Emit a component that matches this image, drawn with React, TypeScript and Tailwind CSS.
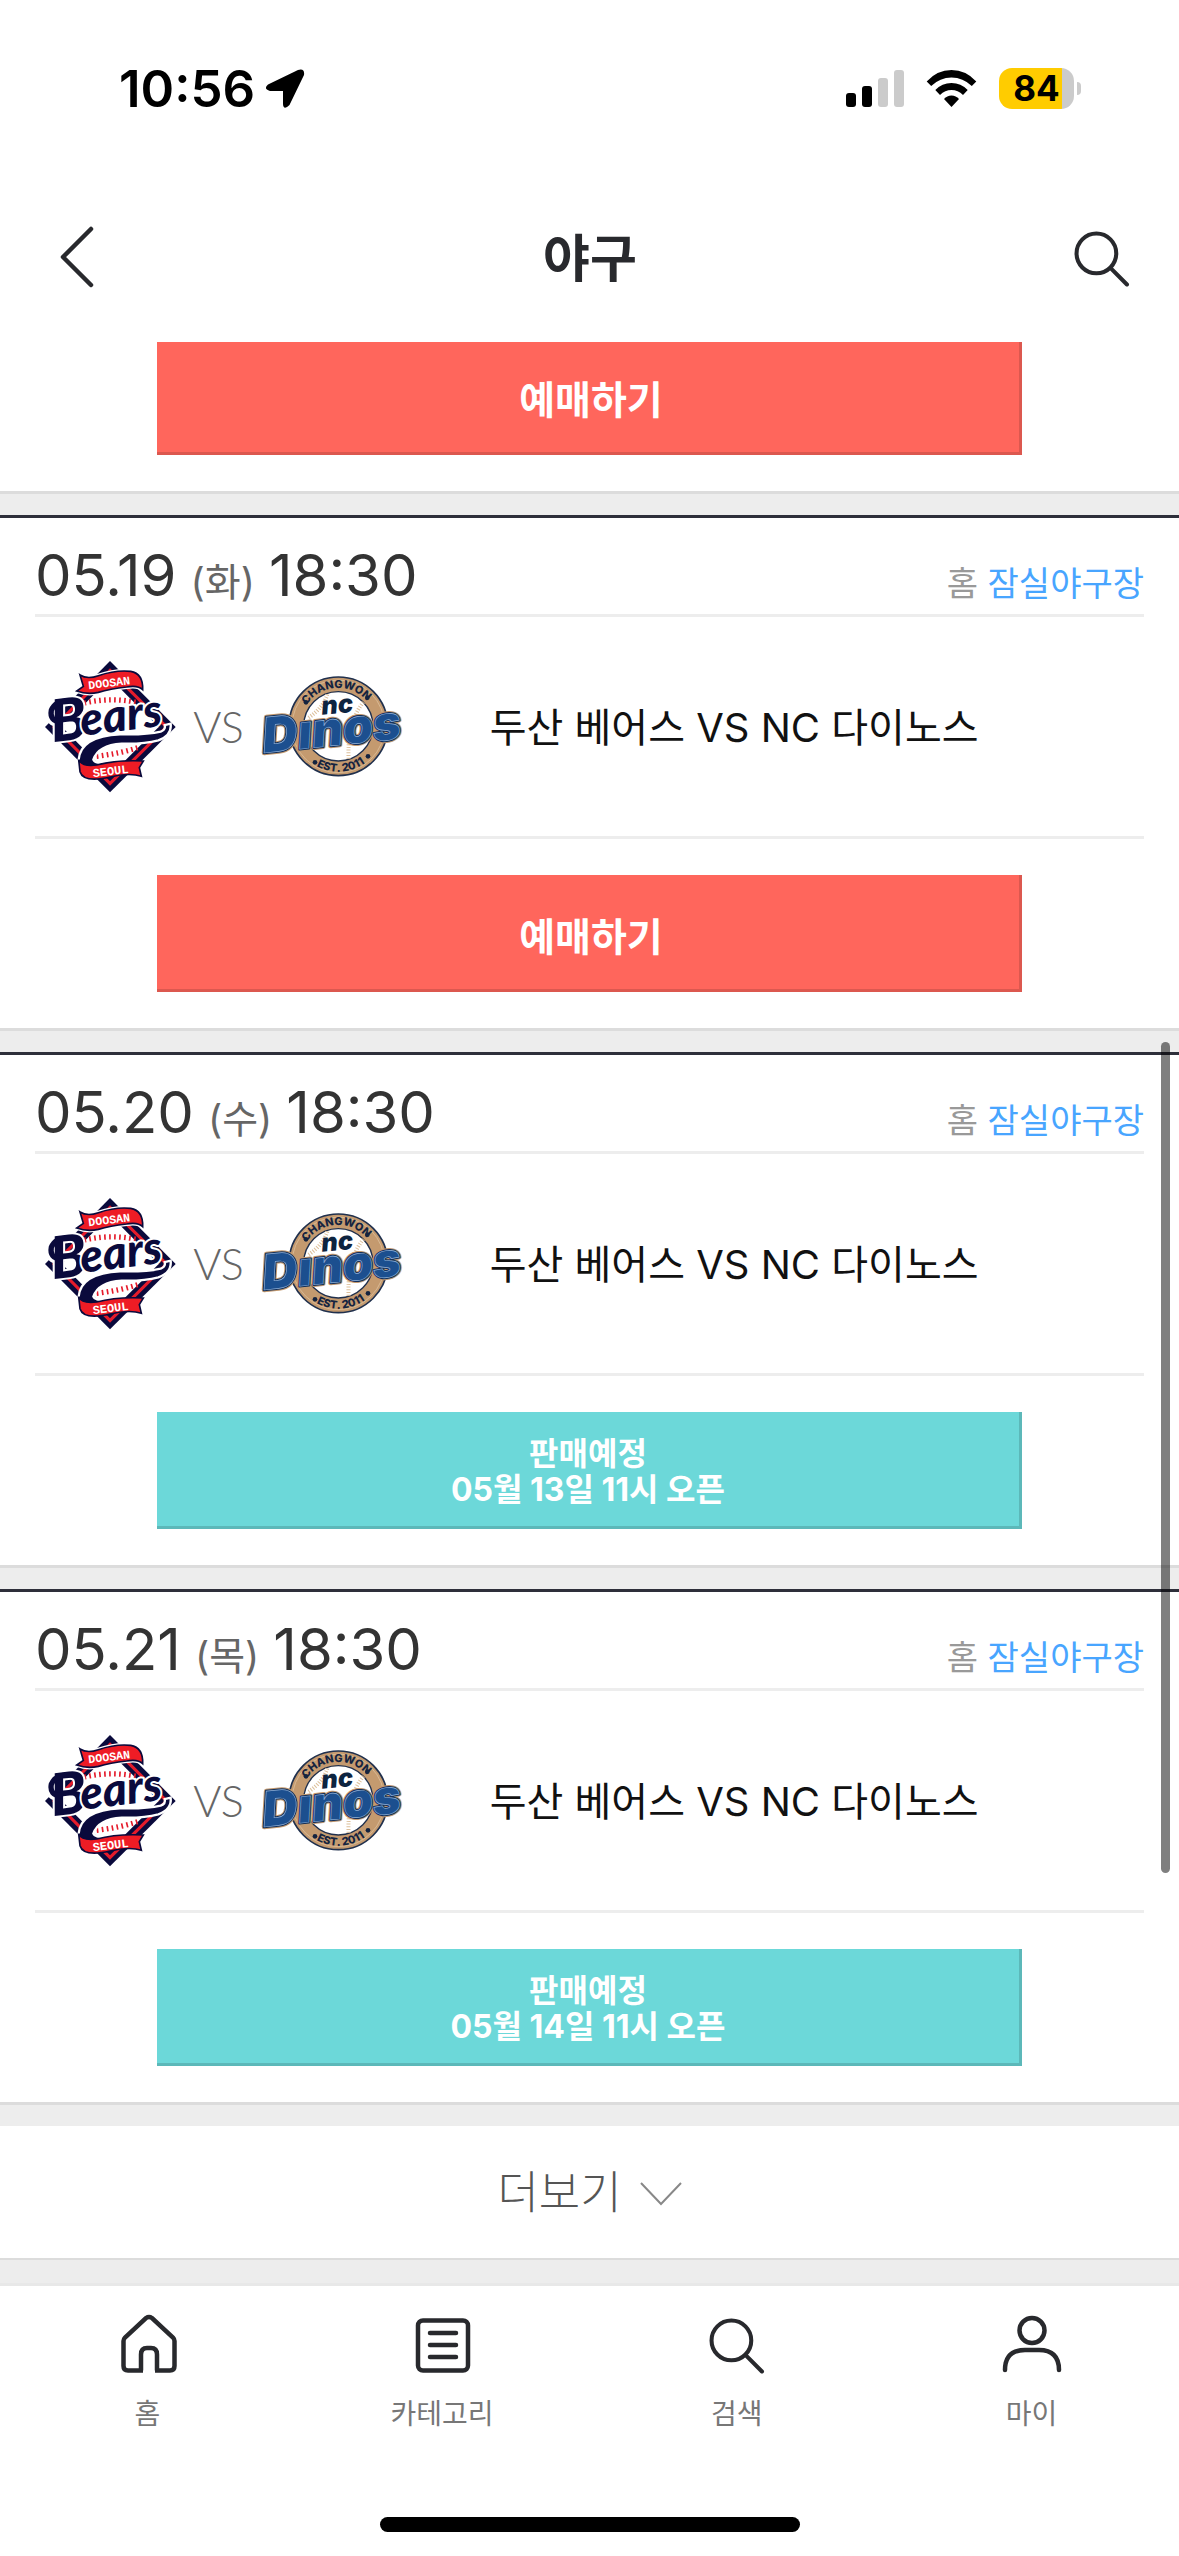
import React from "react";

const FONT = "font-[Inter,'Noto_Sans_CJK_KR',sans-serif]";

type Match = {
  date: string;
  day: string;
  time: string;
  venue: string;
  title: string;
  opens?: string;
};

const matches: Match[] = [
  { date: "05.19", day: "화", time: "18:30", venue: "잠실야구장", title: "두산 베어스 VS NC 다이노스" },
  { date: "05.20", day: "수", time: "18:30", venue: "잠실야구장", title: "두산 베어스 VS NC 다이노스", opens: "05월 13일 11시 오픈" },
  { date: "05.21", day: "목", time: "18:30", venue: "잠실야구장", title: "두산 베어스 VS NC 다이노스", opens: "05월 14일 11시 오픈" },
];

function BearsLogo() {
  return (
    <svg viewBox="42 63 399 399" className="size-[133px] shrink-0" role="img" aria-label="Doosan Bears">
      <path d="M240 66 437 264 240 460 45 264Z" fill="#0a0a3c" />
      <path d="M240 88 416 264 240 440 66 264Z" fill="#e51b2b" />
      <path d="M240 101 403 264 240 427 79 264Z" fill="#0a0a3c" />
      <path d="M240 118 386 264 240 410 96 264Z" fill="#fff" />
      <path d="M163 192Q240 174 320 190" fill="none" stroke="#e51b2b" strokeWidth="16" strokeDasharray="5 10" />
      <path d="M200 352Q270 344 330 324" fill="none" stroke="#e51b2b" strokeWidth="16" strokeDasharray="5 10" />
      <path d="M150 108Q172 122 205 110Q258 92 302 97Q340 104 338 152Q324 138 290 144Q240 150 205 160Q172 168 140 156L160 142Z" fill="#e51b2b" stroke="#fff" strokeWidth="12" />
      <path d="M150 108Q172 122 205 110Q258 92 302 97Q340 104 338 152Q324 138 290 144Q240 150 205 160Q172 168 140 156L160 142Z" fill="#ee1c25" stroke="#0a0a3c" strokeWidth="5" />
      <text transform="translate(239 143) rotate(-7)" textAnchor="middle" className="font-['Liberation_Mono']" fontWeight="700" fontSize="35" fill="#fff">DOOSAN</text>
      {/* tail that sweeps from the last letter back under the name */}
      <path d="M422 254Q426 290 385 304Q340 316 275 314Q205 318 190 362Q194 374 232 374L214 400Q142 398 146 362Q152 292 270 286Q350 288 392 278Q408 272 404 258Z" fill="#0a0a3c" stroke="#fff" strokeWidth="7" />
      <path d="M146 362Q156 384 200 378Q260 362 340 366L328 386 334 412Q300 400 240 414Q160 432 150 398Z" fill="#ee1c25" stroke="#0a0a3c" strokeWidth="5" />
      <text transform="translate(243 408) rotate(-7)" textAnchor="middle" className="font-['Liberation_Mono']" fontWeight="700" fontSize="36" fill="#fff">SEOUL</text>
      <path d="M92 252Q52 250 58 214Q72 176 128 184" fill="none" stroke="#fff" strokeWidth="26" />
      <g className="font-[Lato]" fontWeight="900" fontStyle="italic" fill="#0a0a3c" stroke="#fff" strokeWidth="12" paintOrder="stroke" strokeLinejoin="round">
        <text transform="translate(68 310) rotate(-7)" fontSize="176">B</text>
        <text transform="translate(156 290) rotate(-7)" fontSize="138">ears</text>
      </g>
      <path d="M92 248Q58 246 64 214Q78 180 132 187" fill="none" stroke="#0a0a3c" strokeWidth="16" strokeLinecap="round" />
    </svg>
  );
}

function DinosLogo({ id }: { id: string }) {
  return (
    <svg viewBox="690 105 450 315" className="h-[105px] w-[150px] shrink-0 overflow-visible" role="img" aria-label="NC Dinos">
      <defs>
        <path id={`${id}-top`} d="M810 262A115 115 0 0 1 1040 262" />
        <path id={`${id}-bottom`} d="M789 262A136 136 0 0 0 1061 262" />
      </defs>
      <circle cx="925" cy="262" r="148" fill="#c49a6f" stroke="#20304d" strokeWidth="5" />
      <circle cx="925" cy="262" r="139" fill="none" stroke="#e2c7a4" strokeWidth="2" />
      <circle cx="925" cy="262" r="104" fill="#fff" stroke="#20304d" strokeWidth="4" />
      <path d="M836 236Q880 206 892 166M1000 190Q950 250 956 364" fill="none" stroke="#dcbf9a" strokeWidth="12" strokeDasharray="3 5" />
      <g className="font-[Inter]" fontWeight="800" fill="#14233f">
        <text fontSize="33" textAnchor="middle">
          <textPath href={`#${id}-top`} startOffset="48%">CHANGWON</textPath>
        </text>
        <text fontSize="33" textAnchor="middle">
          <textPath href={`#${id}-bottom`} startOffset="52%">EST. 2011</textPath>
        </text>
      </g>
      <g fill="#14233f">
        <circle cx="828" cy="190" r="7" />
        <circle cx="1012" cy="176" r="7" />
        <circle cx="855" cy="370" r="7" />
        <circle cx="1014" cy="352" r="7" />
      </g>
      <text transform="translate(876 227) rotate(-5)" className="font-[Inter]" fontWeight="900" fontStyle="italic" fontSize="76" fill="#0d2440">nc</text>
      <g className="font-[Inter]" fontWeight="900" fontStyle="italic" strokeLinejoin="round">
        <g fill="#c49a6f" stroke="#c49a6f" strokeWidth="14">
          <text transform="translate(702 342) rotate(-6)" fontSize="146">D</text>
          <text transform="translate(808 331) rotate(-6)" fontSize="144">ınos</text>
        </g>
        <g fill="#14305a" stroke="#14305a" strokeWidth="8">
          <text transform="translate(702 342) rotate(-6)" fontSize="146">D</text>
          <text transform="translate(808 331) rotate(-6)" fontSize="144">ınos</text>
        </g>
        <g fill="#1c4f8f" stroke="#8fb0d8" strokeWidth="2">
          <text transform="translate(702 342) rotate(-6)" fontSize="146">D</text>
          <text transform="translate(808 331) rotate(-6)" fontSize="144">ınos</text>
        </g>
      </g>
    </svg>
  );
}

function SearchIcon({ className }: { className: string }) {
  return (
    <svg viewBox="0 0 55 55" className={className} fill="none" stroke="#28292d" strokeWidth="4" strokeLinecap="round" aria-hidden="true">
      <circle cx="22" cy="22" r="19.500" />
      <path d="M36 36.500 52 52.500" />
    </svg>
  );
}

function HomeIcon() {
  return (
    <svg viewBox="2 0 60 60" className="ml-1 size-[60px]" fill="none" stroke="#28292d" strokeWidth="4.500" aria-hidden="true">
      <path d="M24 56.500V40.500Q24 34 30 34H34Q40 34 40 40.500V56.500M26 56.500H11Q6.500 56.500 6.500 52V27Q6.500 25 8 23.500L29 4Q32 2 35 4L56 23.500Q57.500 25 57.500 27V52Q57.500 56.500 53 56.500H38" />
    </svg>
  );
}

function ListIcon() {
  return (
    <svg viewBox="0 0 60 60" className="ml-[2px] size-[60px]" fill="none" stroke="#28292d" strokeWidth="4.500" strokeLinecap="round" aria-hidden="true">
      <rect x="5" y="6.500" width="50" height="50" rx="5" />
      <path d="M17 19H43M17 31H43M17 43H43" />
    </svg>
  );
}

function UserIcon() {
  return (
    <svg viewBox="0 0 60 60" className="size-[60px]" fill="none" stroke="#28292d" strokeWidth="4.500" strokeLinecap="round" aria-hidden="true">
      <circle cx="30" cy="16.500" r="12.500" />
      <path d="M3 56Q3 36 23 36H37Q57 36 57 56" />
    </svg>
  );
}

function StatusBar() {
  return (
    <div className="flex h-[177px] items-center justify-between pr-[98px] pl-[119px]">
      <div className="flex items-center gap-[10px]">
        <span className="text-[51px] leading-none font-semibold text-black">10:56</span>
        <svg viewBox="0 0 40 40" className="size-10" aria-hidden="true">
          <path d="M3 15.500 33 1Q40 -1 39 6L24.500 36Q18.500 42 18 35V22H5Q-2 20 3 15.500Z" fill="#000" />
        </svg>
      </div>
      <div className="flex items-center gap-[22px]">
        <svg viewBox="0 0 58 37" className="h-[37px] w-[58px]" aria-hidden="true">
          <rect x="0" y="23" width="10" height="14" rx="3" />
          <rect x="16" y="16" width="10" height="21" rx="3" />
          <rect x="32" y="8" width="10" height="29" rx="3" fill="#cbcbcb" />
          <rect x="48" y="0" width="10" height="37" rx="3" fill="#cbcbcb" />
        </svg>
        <svg viewBox="0 0 51 37" className="h-[37px] w-[51px]" aria-hidden="true">
          <path d="M.7 11.500Q11 0 25.500 0T50.300 11.500L45.800 16Q37 7.500 25.500 7.500T5.200 16Z" />
          <path d="M9.300 20Q16 13 25.500 13T41.700 20L37 25Q32 20 25.500 20T14 25Z" />
          <path d="M18 29Q21 25.500 25.500 25.500T33 29L25.500 37Z" />
        </svg>
        <div className="flex items-center gap-[3px]">
          <div className="flex h-[41px] w-[75px] items-center justify-center rounded-[13px] bg-linear-to-r from-[#ffcc00] from-84% to-[#cbcbcb] to-84%">
            <span className="text-[35px] leading-none font-bold text-black">84</span>
          </div>
          <div className="h-[13px] w-1 rounded-r-full bg-[#cbcbcb]" />
        </div>
      </div>
    </div>
  );
}

function BookButton() {
  return (
    <button className="mx-auto block h-[117px] w-[78%] border-r-3 border-b-3 border-[#dc584f] bg-[#ff665c] pt-2 pl-[6px] text-[39px] leading-none font-bold text-white">
      예매하기
    </button>
  );
}

function MatchCard({ match, id }: { match: Match; id: string }) {
  return (
    <article className="border-t-3 border-b-3 border-t-[#2e2f3a] border-b-[#dcdcdc] bg-white px-[35px] pb-9">
      <header className="flex h-[99px] items-end justify-between border-b-3 border-[#ededed]">
        <h2 className="flex items-baseline gap-[14px] pb-[2px] text-[58px] leading-[74px] text-[#333]">
          {match.date}
          <span className="text-[39px] leading-none text-[#666]">({match.day})</span>
          <span>{match.time}</span>
        </h2>
        <p className="pb-[5px] text-[34px] leading-[50px] text-[#999]">
          홈 <a href="#venue" className="text-[#48a5ff]">{match.venue}</a>
        </p>
      </header>
      <div className="flex h-[222px] items-center border-b-3 border-[#ededed]">
        <div className="flex w-[41%] items-center pl-[9px]">
          <BearsLogo />
          <span className="w-[83px] text-center font-[Lato] text-[43px] leading-none font-light text-[#666]">VS</span>
          <DinosLogo id={id} />
        </div>
        <p className="pt-[2px] text-[40px] leading-none text-[#111]">{match.title}</p>
      </div>
      <div className="pt-9">
        {match.opens ? (
          <button className="mx-auto block h-[117px] w-[78%] border-r-3 border-b-3 border-[#5cb8b9] bg-[#6cd8d9] pt-[6px] text-[32px] leading-9 font-bold text-white">
            판매예정
            <br />
            {match.opens}
          </button>
        ) : (
          <BookButton />
        )}
      </div>
    </article>
  );
}

const tabs = [
  { label: "홈", icon: <HomeIcon /> },
  { label: "카테고리", icon: <ListIcon /> },
  { label: "검색", icon: <SearchIcon className="mt-1 size-[56px]" /> },
  { label: "마이", icon: <UserIcon /> },
];

export default function App() {
  return (
    <div className={`relative flex min-h-screen flex-col bg-[#ededed] ${FONT}`}>
      <header className="relative z-10 bg-white">
        <StatusBar />
        <div className="grid h-[165px] grid-cols-[1fr_auto_1fr] items-center pr-[49px] pb-[2px] pl-[60px]">
          <button aria-label="뒤로" className="justify-self-start">
            <svg viewBox="0 0 34 62" className="mb-1 h-[62px] w-[34px]" fill="none" stroke="#28292d" strokeWidth="4.500" strokeLinecap="round" strokeLinejoin="round" aria-hidden="true">
              <path d="M31 3 3 31 31 59" />
            </svg>
          </button>
          <h1 className="pr-[10px] text-[51px] leading-none font-bold text-[#28292d]">야구</h1>
          <button aria-label="검색" className="justify-self-end">
            <SearchIcon className="size-[56px]" />
          </button>
        </div>
      </header>

      <main className="flex flex-col gap-[21px]">
        <section className="-mt-1 border-b-3 border-[#dcdcdc] bg-white px-[35px] pb-9">
          <BookButton />
        </section>
        {matches.map((m) => (
          <MatchCard key={m.date} match={m} id={`dinos-${m.date}`} />
        ))}
        <button className="flex h-[134px] items-center justify-center gap-[18px] border-b-2 border-[#dcdcdc] bg-white text-[45px] leading-none font-light text-[#555]">
          더보기
          <svg viewBox="0 0 42 24" className="mt-1 h-6 w-[42px]" fill="none" stroke="#888" strokeWidth="2" aria-hidden="true">
            <path d="M1 1 21 22 41 1" />
          </svg>
        </button>
      </main>

      <nav className="mt-[23px] border-t-3 border-[#e8e8e8] bg-white pt-7 pb-6">
        <ul className="grid grid-cols-4">
          {tabs.map((t) => (
            <li key={t.label}>
              <a href="#tab" className="flex flex-col items-center text-[28px] leading-9 text-[#777]">
                <span className="flex h-[82px] items-start">{t.icon}</span>
                {t.label}
              </a>
            </li>
          ))}
        </ul>
        <div className="mx-auto mt-[85px] h-[15px] w-[420px] rounded-full bg-black" />
      </nav>

      <div className="absolute top-[1042px] right-[9px] h-[831px] w-[9px] rounded-full bg-black/50" />
    </div>
  );
}
